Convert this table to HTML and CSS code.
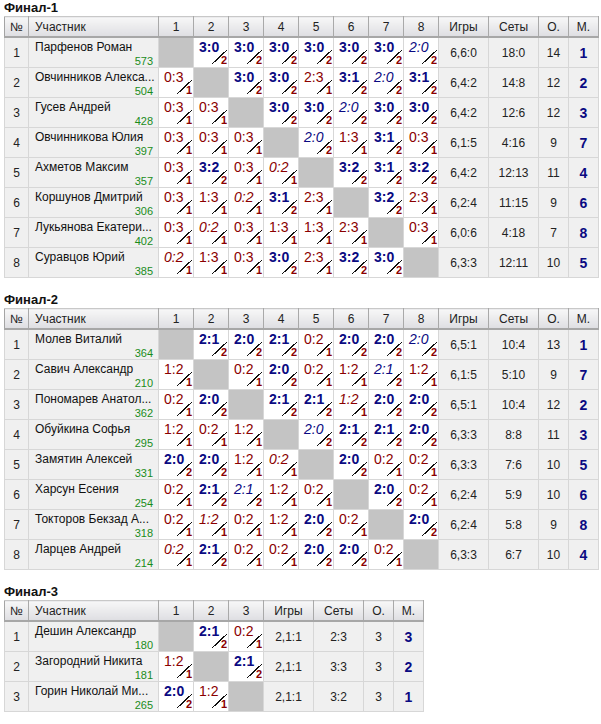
FILE: index.html
```html
<!DOCTYPE html>
<html lang="ru">
<head>
<meta charset="utf-8">
<title>Финалы</title>
<link rel="stylesheet" href="styles.css">
</head>
<body>

<section class="sec">
<div class="ttl">Финал-1</div>
<table class="grid g8">
<colgroup><col class="c-no"><col class="c-nm"><col class="c-s"><col class="c-s"><col class="c-s"><col class="c-s"><col class="c-s"><col class="c-s"><col class="c-s"><col class="c-s"><col class="c-g"><col class="c-g"><col class="c-p"><col class="c-p"></colgroup>
<thead><tr><th>№</th><th class="h-nm">Участник</th><th>1</th><th>2</th><th>3</th><th>4</th><th>5</th><th>6</th><th>7</th><th>8</th><th>Игры</th><th>Сеты</th><th>О.</th><th>М.</th></tr></thead>
<tbody>
<tr><td class="no">1</td><td class="nm"><div><span class="n">Парфенов Роман</span><span class="r">573</span></div></td>
<td class="x"></td>
<td><div class="sc w"><span>3:0</span><b>2</b></div></td>
<td><div class="sc w"><span>3:0</span><b>2</b></div></td>
<td><div class="sc w"><span>3:0</span><b>2</b></div></td>
<td><div class="sc w"><span>3:0</span><b>2</b></div></td>
<td><div class="sc w"><span>3:0</span><b>2</b></div></td>
<td><div class="sc w"><span>3:0</span><b>2</b></div></td>
<td><div class="sc wi"><span>2:0</span><b>2</b></div></td>
<td class="st">6,6:0</td><td class="st">18:0</td><td class="st">14</td><td class="st pl">1</td></tr>

<tr><td class="no">2</td><td class="nm"><div><span class="n">Овчинников Алекса...</span><span class="r">504</span></div></td>
<td><div class="sc l"><span>0:3</span><b>1</b></div></td>
<td class="x"></td>
<td><div class="sc w"><span>3:0</span><b>2</b></div></td>
<td><div class="sc w"><span>3:0</span><b>2</b></div></td>
<td><div class="sc l"><span>2:3</span><b>1</b></div></td>
<td><div class="sc w"><span>3:1</span><b>2</b></div></td>
<td><div class="sc wi"><span>2:0</span><b>2</b></div></td>
<td><div class="sc w"><span>3:1</span><b>2</b></div></td>
<td class="st">6,4:2</td><td class="st">14:8</td><td class="st">12</td><td class="st pl">2</td></tr>

<tr><td class="no">3</td><td class="nm"><div><span class="n">Гусев Андрей</span><span class="r">428</span></div></td>
<td><div class="sc l"><span>0:3</span><b>1</b></div></td>
<td><div class="sc l"><span>0:3</span><b>1</b></div></td>
<td class="x"></td>
<td><div class="sc w"><span>3:0</span><b>2</b></div></td>
<td><div class="sc w"><span>3:0</span><b>2</b></div></td>
<td><div class="sc wi"><span>2:0</span><b>2</b></div></td>
<td><div class="sc w"><span>3:0</span><b>2</b></div></td>
<td><div class="sc w"><span>3:0</span><b>2</b></div></td>
<td class="st">6,4:2</td><td class="st">12:6</td><td class="st">12</td><td class="st pl">3</td></tr>

<tr><td class="no">4</td><td class="nm"><div><span class="n">Овчинникова Юлия</span><span class="r">397</span></div></td>
<td><div class="sc l"><span>0:3</span><b>1</b></div></td>
<td><div class="sc l"><span>0:3</span><b>1</b></div></td>
<td><div class="sc l"><span>0:3</span><b>1</b></div></td>
<td class="x"></td>
<td><div class="sc wi"><span>2:0</span><b>2</b></div></td>
<td><div class="sc l"><span>1:3</span><b>1</b></div></td>
<td><div class="sc w"><span>3:1</span><b>2</b></div></td>
<td><div class="sc l"><span>0:3</span><b>1</b></div></td>
<td class="st">6,1:5</td><td class="st">4:16</td><td class="st">9</td><td class="st pl">7</td></tr>

<tr><td class="no">5</td><td class="nm"><div><span class="n">Ахметов Максим</span><span class="r">357</span></div></td>
<td><div class="sc l"><span>0:3</span><b>1</b></div></td>
<td><div class="sc w"><span>3:2</span><b>2</b></div></td>
<td><div class="sc l"><span>0:3</span><b>1</b></div></td>
<td><div class="sc li"><span>0:2</span><b>1</b></div></td>
<td class="x"></td>
<td><div class="sc w"><span>3:2</span><b>2</b></div></td>
<td><div class="sc w"><span>3:1</span><b>2</b></div></td>
<td><div class="sc w"><span>3:2</span><b>2</b></div></td>
<td class="st">6,4:2</td><td class="st">12:13</td><td class="st">11</td><td class="st pl">4</td></tr>

<tr><td class="no">6</td><td class="nm"><div><span class="n">Коршунов Дмитрий</span><span class="r">306</span></div></td>
<td><div class="sc l"><span>0:3</span><b>1</b></div></td>
<td><div class="sc l"><span>1:3</span><b>1</b></div></td>
<td><div class="sc li"><span>0:2</span><b>1</b></div></td>
<td><div class="sc w"><span>3:1</span><b>2</b></div></td>
<td><div class="sc l"><span>2:3</span><b>1</b></div></td>
<td class="x"></td>
<td><div class="sc w"><span>3:2</span><b>2</b></div></td>
<td><div class="sc l"><span>2:3</span><b>1</b></div></td>
<td class="st">6,2:4</td><td class="st">11:15</td><td class="st">9</td><td class="st pl">6</td></tr>

<tr><td class="no">7</td><td class="nm"><div><span class="n">Лукьянова Екатери...</span><span class="r">402</span></div></td>
<td><div class="sc l"><span>0:3</span><b>1</b></div></td>
<td><div class="sc li"><span>0:2</span><b>1</b></div></td>
<td><div class="sc l"><span>0:3</span><b>1</b></div></td>
<td><div class="sc l"><span>1:3</span><b>1</b></div></td>
<td><div class="sc l"><span>1:3</span><b>1</b></div></td>
<td><div class="sc l"><span>2:3</span><b>1</b></div></td>
<td class="x"></td>
<td><div class="sc l"><span>0:3</span><b>1</b></div></td>
<td class="st">6,0:6</td><td class="st">4:18</td><td class="st">7</td><td class="st pl">8</td></tr>

<tr><td class="no">8</td><td class="nm"><div><span class="n">Суравцов Юрий</span><span class="r">385</span></div></td>
<td><div class="sc li"><span>0:2</span><b>1</b></div></td>
<td><div class="sc l"><span>1:3</span><b>1</b></div></td>
<td><div class="sc l"><span>0:3</span><b>1</b></div></td>
<td><div class="sc w"><span>3:0</span><b>2</b></div></td>
<td><div class="sc l"><span>2:3</span><b>1</b></div></td>
<td><div class="sc w"><span>3:2</span><b>2</b></div></td>
<td><div class="sc w"><span>3:0</span><b>2</b></div></td>
<td class="x"></td>
<td class="st">6,3:3</td><td class="st">12:11</td><td class="st">10</td><td class="st pl">5</td></tr>
</tbody>
</table>
</section>

<section class="sec">
<div class="ttl">Финал-2</div>
<table class="grid g8">
<colgroup><col class="c-no"><col class="c-nm"><col class="c-s"><col class="c-s"><col class="c-s"><col class="c-s"><col class="c-s"><col class="c-s"><col class="c-s"><col class="c-s"><col class="c-g"><col class="c-g"><col class="c-p"><col class="c-p"></colgroup>
<thead><tr><th>№</th><th class="h-nm">Участник</th><th>1</th><th>2</th><th>3</th><th>4</th><th>5</th><th>6</th><th>7</th><th>8</th><th>Игры</th><th>Сеты</th><th>О.</th><th>М.</th></tr></thead>
<tbody>
<tr><td class="no">1</td><td class="nm"><div><span class="n">Молев Виталий</span><span class="r">364</span></div></td>
<td class="x"></td>
<td><div class="sc w"><span>2:1</span><b>2</b></div></td>
<td><div class="sc w"><span>2:0</span><b>2</b></div></td>
<td><div class="sc w"><span>2:1</span><b>2</b></div></td>
<td><div class="sc l"><span>0:2</span><b>1</b></div></td>
<td><div class="sc w"><span>2:0</span><b>2</b></div></td>
<td><div class="sc w"><span>2:0</span><b>2</b></div></td>
<td><div class="sc wi"><span>2:0</span><b>2</b></div></td>
<td class="st">6,5:1</td><td class="st">10:4</td><td class="st">13</td><td class="st pl">1</td></tr>

<tr><td class="no">2</td><td class="nm"><div><span class="n">Савич Александр</span><span class="r">210</span></div></td>
<td><div class="sc l"><span>1:2</span><b>1</b></div></td>
<td class="x"></td>
<td><div class="sc l"><span>0:2</span><b>1</b></div></td>
<td><div class="sc w"><span>2:0</span><b>2</b></div></td>
<td><div class="sc l"><span>0:2</span><b>1</b></div></td>
<td><div class="sc l"><span>1:2</span><b>1</b></div></td>
<td><div class="sc wi"><span>2:1</span><b>2</b></div></td>
<td><div class="sc l"><span>1:2</span><b>1</b></div></td>
<td class="st">6,1:5</td><td class="st">5:10</td><td class="st">9</td><td class="st pl">7</td></tr>

<tr><td class="no">3</td><td class="nm"><div><span class="n">Пономарев Анатол...</span><span class="r">362</span></div></td>
<td><div class="sc l"><span>0:2</span><b>1</b></div></td>
<td><div class="sc w"><span>2:0</span><b>2</b></div></td>
<td class="x"></td>
<td><div class="sc w"><span>2:1</span><b>2</b></div></td>
<td><div class="sc w"><span>2:1</span><b>2</b></div></td>
<td><div class="sc li"><span>1:2</span><b>1</b></div></td>
<td><div class="sc w"><span>2:0</span><b>2</b></div></td>
<td><div class="sc w"><span>2:0</span><b>2</b></div></td>
<td class="st">6,5:1</td><td class="st">10:4</td><td class="st">12</td><td class="st pl">2</td></tr>

<tr><td class="no">4</td><td class="nm"><div><span class="n">Обуйкина Софья</span><span class="r">295</span></div></td>
<td><div class="sc l"><span>1:2</span><b>1</b></div></td>
<td><div class="sc l"><span>0:2</span><b>1</b></div></td>
<td><div class="sc l"><span>1:2</span><b>1</b></div></td>
<td class="x"></td>
<td><div class="sc wi"><span>2:0</span><b>2</b></div></td>
<td><div class="sc w"><span>2:1</span><b>2</b></div></td>
<td><div class="sc w"><span>2:1</span><b>2</b></div></td>
<td><div class="sc w"><span>2:0</span><b>2</b></div></td>
<td class="st">6,3:3</td><td class="st">8:8</td><td class="st">11</td><td class="st pl">3</td></tr>

<tr><td class="no">5</td><td class="nm"><div><span class="n">Замятин Алексей</span><span class="r">331</span></div></td>
<td><div class="sc w"><span>2:0</span><b>2</b></div></td>
<td><div class="sc w"><span>2:0</span><b>2</b></div></td>
<td><div class="sc l"><span>1:2</span><b>1</b></div></td>
<td><div class="sc li"><span>0:2</span><b>1</b></div></td>
<td class="x"></td>
<td><div class="sc w"><span>2:0</span><b>2</b></div></td>
<td><div class="sc l"><span>0:2</span><b>1</b></div></td>
<td><div class="sc l"><span>0:2</span><b>1</b></div></td>
<td class="st">6,3:3</td><td class="st">7:6</td><td class="st">10</td><td class="st pl">5</td></tr>

<tr><td class="no">6</td><td class="nm"><div><span class="n">Харсун Есения</span><span class="r">254</span></div></td>
<td><div class="sc l"><span>0:2</span><b>1</b></div></td>
<td><div class="sc w"><span>2:1</span><b>2</b></div></td>
<td><div class="sc wi"><span>2:1</span><b>2</b></div></td>
<td><div class="sc l"><span>1:2</span><b>1</b></div></td>
<td><div class="sc l"><span>0:2</span><b>1</b></div></td>
<td class="x"></td>
<td><div class="sc w"><span>2:0</span><b>2</b></div></td>
<td><div class="sc l"><span>0:2</span><b>1</b></div></td>
<td class="st">6,2:4</td><td class="st">5:9</td><td class="st">10</td><td class="st pl">6</td></tr>

<tr><td class="no">7</td><td class="nm"><div><span class="n">Токторов Бекзад А...</span><span class="r">318</span></div></td>
<td><div class="sc l"><span>0:2</span><b>1</b></div></td>
<td><div class="sc li"><span>1:2</span><b>1</b></div></td>
<td><div class="sc l"><span>0:2</span><b>1</b></div></td>
<td><div class="sc l"><span>1:2</span><b>1</b></div></td>
<td><div class="sc w"><span>2:0</span><b>2</b></div></td>
<td><div class="sc l"><span>0:2</span><b>1</b></div></td>
<td class="x"></td>
<td><div class="sc w"><span>2:0</span><b>2</b></div></td>
<td class="st">6,2:4</td><td class="st">5:8</td><td class="st">9</td><td class="st pl">8</td></tr>

<tr><td class="no">8</td><td class="nm"><div><span class="n">Ларцев Андрей</span><span class="r">214</span></div></td>
<td><div class="sc li"><span>0:2</span><b>1</b></div></td>
<td><div class="sc w"><span>2:1</span><b>2</b></div></td>
<td><div class="sc l"><span>0:2</span><b>1</b></div></td>
<td><div class="sc l"><span>0:2</span><b>1</b></div></td>
<td><div class="sc w"><span>2:0</span><b>2</b></div></td>
<td><div class="sc w"><span>2:0</span><b>2</b></div></td>
<td><div class="sc l"><span>0:2</span><b>1</b></div></td>
<td class="x"></td>
<td class="st">6,3:3</td><td class="st">6:7</td><td class="st">10</td><td class="st pl">4</td></tr>
</tbody>
</table>
</section>

<section class="sec">
<div class="ttl">Финал-3</div>
<table class="grid g3">
<colgroup><col class="c-no"><col class="c-nm"><col class="c-s"><col class="c-s"><col class="c-s"><col class="c-g"><col class="c-g"><col class="c-p"><col class="c-p"></colgroup>
<thead><tr><th>№</th><th class="h-nm">Участник</th><th>1</th><th>2</th><th>3</th><th>Игры</th><th>Сеты</th><th>О.</th><th>М.</th></tr></thead>
<tbody>
<tr><td class="no">1</td><td class="nm"><div><span class="n">Дешин Александр</span><span class="r">180</span></div></td>
<td class="x"></td>
<td><div class="sc w"><span>2:1</span><b>2</b></div></td>
<td><div class="sc l"><span>0:2</span><b>1</b></div></td>
<td class="st">2,1:1</td><td class="st">2:3</td><td class="st">3</td><td class="st pl">3</td></tr>

<tr><td class="no">2</td><td class="nm"><div><span class="n">Загородний Никита</span><span class="r">181</span></div></td>
<td><div class="sc l"><span>1:2</span><b>1</b></div></td>
<td class="x"></td>
<td><div class="sc w"><span>2:1</span><b>2</b></div></td>
<td class="st">2,1:1</td><td class="st">3:3</td><td class="st">3</td><td class="st pl">2</td></tr>

<tr><td class="no">3</td><td class="nm"><div><span class="n">Горин Николай Ми...</span><span class="r">265</span></div></td>
<td><div class="sc w"><span>2:0</span><b>2</b></div></td>
<td><div class="sc l"><span>1:2</span><b>1</b></div></td>
<td class="x"></td>
<td class="st">2,1:1</td><td class="st">3:2</td><td class="st">3</td><td class="st pl">1</td></tr>
</tbody>
</table>
</section>

</body>
</html>
```

FILE: styles.css
```css
html, body {
  margin: 0;
  padding: 0;
  background: #fff;
}
body {
  padding: 0 4px;
  font-family: "Liberation Sans", Arial, sans-serif;
  font-size: 12px;
  color: #222;
}

.sec + .sec { margin-top: 14px; }

.ttl {
  font-weight: bold;
  font-size: 13px;
  line-height: 16px;
  height: 16px;
  color: #111;
}

.grid {
  border-collapse: collapse;
  table-layout: fixed;
  border: 1px solid #a4a4a4;
}
.g8 { width: 594px; }
.g3 { width: 419px; }

.c-no { width: 24px; }
.c-nm { width: 130px; }
.c-s  { width: 35px; }
.c-g  { width: 50px; }
.c-p  { width: 30px; }

.grid th {
  height: 19px;
  padding: 0;
  font-weight: normal;
  font-size: 12px;
  color: #222;
  text-align: center;
  background: linear-gradient(#f7f7f7, #dedee2);
  border-top: 1px solid #c8c8c8;
  border-right: 1px solid #a9a9a9;
  border-bottom: 2px solid #a7a7a7;
}
.grid th.h-nm {
  text-align: left;
  padding-left: 6px;
}

.grid td {
  padding: 0;
  border: 1px solid #d7d7d7;
  background: #fff;
  vertical-align: top;
}

.grid td.no,
.grid td.st {
  background: #f0f0f0;
  text-align: center;
  vertical-align: middle;
  height: 29px;
}
.grid td.pl {
  font-weight: bold;
  font-size: 14px;
  color: #0a0a82;
}

.grid td.nm { background: #f0f0f0; }
.nm > div {
  height: 29px;
  box-sizing: border-box;
  padding: 2px 5px 0 6px;
  display: flex;
  flex-direction: column;
  justify-content: space-between;
}
.nm .n {
  line-height: 15px;
  white-space: nowrap;
  margin-right: -4px;
  color: #111;
}
.nm .r {
  align-self: flex-end;
  font-size: 11px;
  line-height: 12px;
  color: #1a8c1a;
}

.grid td.x {
  background: #c4c4c4;
}

.sc {
  display: grid;
  height: 29px;
  box-sizing: border-box;
  padding: 1px 1px 3px 5px;
}
.sc > * { grid-area: 1 / 1; }
.sc span {
  align-self: start;
  justify-self: start;
  font-size: 14px;
  line-height: 16px;
}
.sc b {
  align-self: end;
  justify-self: end;
  width: 15px;
  height: 14px;
  display: flex;
  align-items: flex-end;
  justify-content: flex-end;
  font-size: 11px;
  line-height: 8px;
  font-weight: bold;
  color: #8a0000;
  background: linear-gradient(to bottom right,
    transparent calc(50% - 0.6px),
    #111 calc(50% - 0.6px),
    #111 calc(50% + 0.6px),
    transparent calc(50% + 0.6px)) no-repeat;
}

.w span  { font-weight: bold; color: #0a0a82; }
.wi span { font-style: italic; color: #0a0a82; }
.l span  { color: #8a0000; }
.li span { font-style: italic; color: #8a0000; }
```
